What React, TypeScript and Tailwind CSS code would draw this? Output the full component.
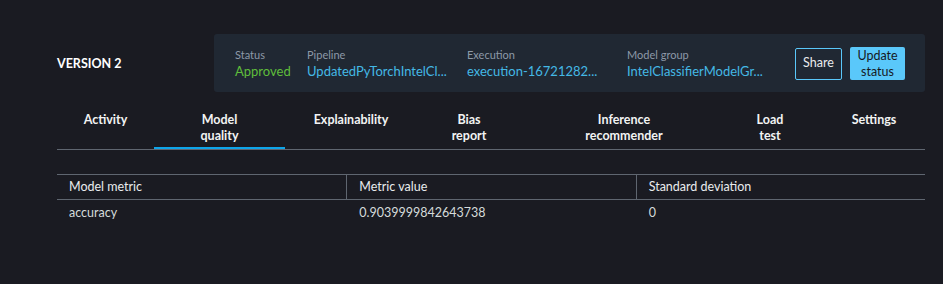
const tabs = [
  { label: ["Activity"], w: "w-[97px]" },
  { label: ["Model", "quality"], w: "w-[131px]", active: true },
  { label: ["Explainability"], w: "w-[132px]" },
  { label: ["Bias", "report"], w: "w-[104px]" },
  { label: ["Inference", "recommender"], w: "w-[206px]" },
  { label: ["Load", "test"], w: "w-[86px]" },
  { label: ["Settings"], w: "w-[112px] pl-[10px]" },
];

function Meta({ label, value, w, color }: { label: string; value: string; w: string; color: string }) {
  return (
    <div className={`${w} flex flex-col`}>
      <span className="text-[11px] leading-[16px] text-[#8d99a8]">{label}</span>
      <span className={`text-[13px] leading-[17px] whitespace-nowrap ${color}`}>{value}</span>
    </div>
  );
}

export default function App() {
  return (
    <div className="min-h-[284px] bg-[#1a1b22] pl-[57px] pr-[18px] pt-[34px] text-[#e9ebed]" style={{ fontFamily: "Lato, 'Liberation Sans', sans-serif" }}>
      {/* Header */}
      <div className="flex items-center">
        <div className="w-[157px] pt-[2px] text-[12.5px] font-bold text-white">VERSION 2</div>
        <div className="flex h-[58px] flex-1 items-center rounded-[3px] bg-[#202833] pl-[21px] pr-[20px] pt-[1px]">
          <Meta label="Status" value="Approved" w="w-[72px]" color="text-[#5fbe3b]" />
          <Meta label="Pipeline" value="UpdatedPyTorchIntelCl..." w="w-[160px]" color="text-[#44b9e6]" />
          <Meta label="Execution" value="execution-16721282..." w="w-[160px]" color="text-[#44b9e6]" />
          <Meta label="Model group" value="IntelClassifierModelGr..." w="w-[168px]" color="text-[#44b9e6]" />
          <button className="h-[32px] w-[47px] rounded-[2px] border border-[#5ac8fa] text-[12.5px] text-[#e9ebed]">Share</button>
          <button className="ml-[8px] h-[33px] w-[55px] rounded-[2px] bg-[#5ac8fa] text-[12.5px] leading-[16px] text-[#16191f]">
            Update
            <br />
            status
          </button>
        </div>
      </div>

      {/* Tabs */}
      <div className="mt-[20px] flex border-b border-[#5f6670]">
        {tabs.map((t) => (
          <div key={t.label.join(" ")} className={`relative h-[37px] ${t.w} text-center text-[12.5px] font-bold leading-[16px] text-[#f2f3f3]`}>
            {t.label.map((l) => (
              <div key={l}>{l}</div>
            ))}
            {t.active && <div className="absolute bottom-[0px] left-0 right-0 h-[2px] bg-[#0ea5e9]" />}
          </div>
        ))}
      </div>

      {/* Table */}
      <div className="mt-[24px] text-[12.5px]">
        <div className="grid grid-cols-3 border-y border-[#5f6670] text-[#e9ebed]">
          <div className="h-[24px] pl-[12px] leading-[24px]">Model metric</div>
          <div className="h-[24px] border-l border-[#5f6670] pl-[12px] leading-[24px]">Metric value</div>
          <div className="h-[24px] border-l border-[#5f6670] pl-[12px] leading-[24px]">Standard deviation</div>
        </div>
        <div className="grid grid-cols-3 text-[#d5dbdb]">
          <div className="h-[26px] pl-[12px] leading-[26px]">accuracy</div>
          <div className="h-[26px] pl-[13px] leading-[26px]">0.9039999842643738</div>
          <div className="h-[26px] pl-[13px] leading-[26px]">0</div>
        </div>
      </div>
    </div>
  );
}
